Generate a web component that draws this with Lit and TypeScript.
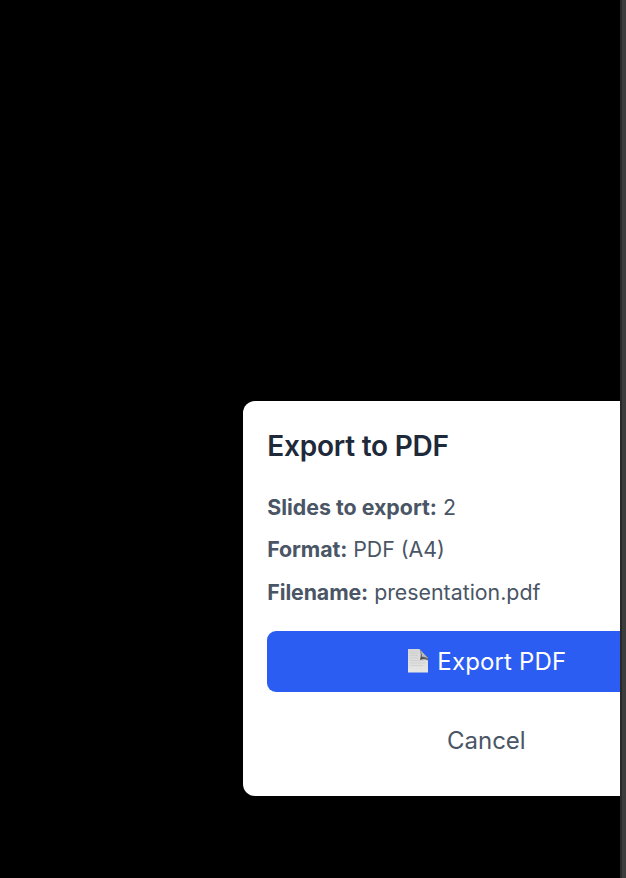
import { LitElement, html, css } from "lit";

class AppRoot extends LitElement {
  static styles = css`
    :host { display: block; height: 878px; overflow: hidden; font-family: Inter, "Liberation Sans", sans-serif; }
    .screen { display: flex; height: 878px; background: #000; }
    .stage { flex: 1; min-width: 0; overflow: hidden; padding: 400.6px 0 0 243.3px; box-sizing: border-box; }
    .edge { box-sizing: border-box; width: 6px; flex: none; background: #3c3c3c; border-left: 2px solid #292929; }
    .dialog { box-sizing: border-box; width: 486px; height: 395px; padding: 24px; background: #fff; border-radius: 12px; color: #4a5565; }
    h2 { margin: 0; padding-top: 3.4px; font-size: 28px; line-height: 36px; font-weight: 600; letter-spacing: -0.22px; color: #1e2939; }
    .facts { margin-top: 25.6px; }
    p { margin: 0; height: 42.5px; line-height: 34px; font-size: 21.33px; white-space: nowrap; font-weight: 400; }
    b { font-weight: 700; }
    .short b { letter-spacing: -0.1px; }
    button { display: flex; align-items: center; justify-content: center; width: 100%; height: 60.5px; border: 0; border-radius: 9px; padding: 0; font: 400 24px/36px Inter, sans-serif; }
    .export { margin-top: 14.4px; background: #2c5df3; color: #fff; gap: 8px; letter-spacing: 0.15px; }
    .cancel { margin-top: 18.5px; background: transparent; color: #4a5565; }
    svg { margin: -1px 0 0 1px; }
  `;
  render() {
    return html`<div class="screen"><main class="stage"><section class="dialog">
      <h2>Export to PDF</h2>
      <div class="facts"><p><b>Slides to export:</b> 2</p><p class="short"><b>Format:</b> PDF (A4)</p><p class="short"><b>Filename:</b> presentation.pdf</p></div>
      <button class="export"><svg width="22" height="26" viewBox="0 0 22 26">
        <defs>
          <linearGradient id="paper" x1="0" y1="0" x2="0" y2="1"><stop stop-color="#d5d5d5"/><stop offset="1" stop-color="#e6e6e6"/></linearGradient>
          <linearGradient id="fold" x1="0" y1="1" x2="1" y2="0"><stop stop-color="#383838"/><stop offset=".5" stop-color="#686868"/><stop offset="1" stop-color="#aaa"/></linearGradient>
        </defs>
        <path d="M1 1h11.500L21 10.500V24.500H1z" fill="url(#paper)"/>
        <path d="M3 5h7M3 7.500h8M3 10h8M3 12.500h14M3 15h15M3 17.500h13" stroke="#cdcdcd" stroke-width=".8"/>
        <path d="M12.500 1q2.300 4 .5 11q4-1.500 8 .5V10z" fill="url(#fold)"/>
        <path d="M12.300 1L21 10.300q-3.200-2-6.200-1.500Q15 4 12.300 1z" fill="#b9bcc3"/>
      </svg><span>Export PDF</span></button>
      <button class="cancel">Cancel</button>
    </section></main><div class="edge"></div></div>`;
  }
}
customElements.define("app-root", AppRoot);
